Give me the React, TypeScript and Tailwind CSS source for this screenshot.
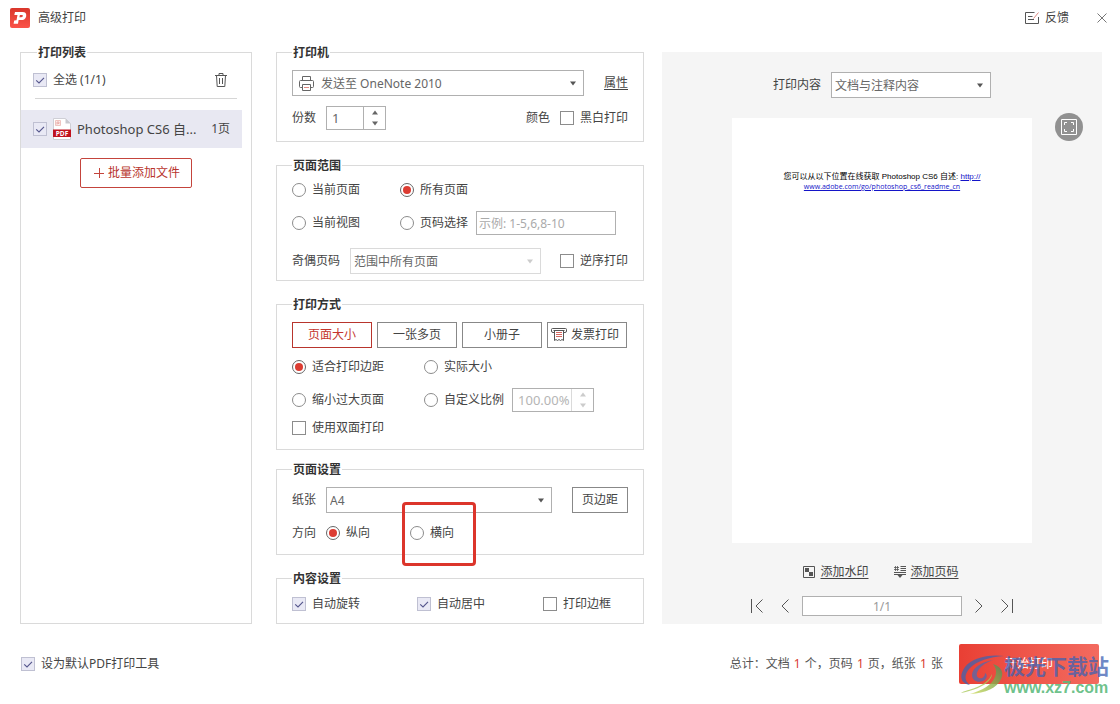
import { useState } from "react"
import type { ReactNode } from "react"

type SectionProps = {
  title: string
  className?: string
  children: ReactNode
}

const Section = ({ title, className = "", children }: SectionProps) => (
  <fieldset className={`min-w-0 border border-[#dadada] px-[15px] ${className}`}>
    <legend className="px-px pt-px font-semibold leading-[15px] text-[#333]">{title}</legend>
    {children}
  </fieldset>
)

type ChoiceProps = {
  label: string
  checked?: boolean
  className?: string
}

const CheckBox = ({ label, checked = false, className = "" }: ChoiceProps) => {
  const [on, setOn] = useState(checked)
  return (
    <label className={`flex items-center gap-1.5 ${className}`}>
      <span className="relative flex">
        <input
          type="checkbox"
          checked={on}
          onChange={() => setOn(!on)}
          className="peer size-3.5 appearance-none border border-[#8c8c8c] bg-white checked:border-[#bfc0d2] checked:bg-[#e9e9f5]"
        />
        <svg
          viewBox="0 0 14 14"
          className="pointer-events-none absolute inset-0 hidden size-3.5 peer-checked:block"
          fill="none"
          stroke="#54558c"
          strokeWidth="1.1"
        >
          <path d="M3.2 7.4 6 10l5-5.2" />
        </svg>
      </span>
      {label}
    </label>
  )
}

type RadioProps = ChoiceProps & { name: string }

const Radio = ({ label, name, checked = false, className = "" }: RadioProps) => (
  <label className={`flex items-center gap-1.5 ${className}`}>
    <input
      type="radio"
      name={name}
      defaultChecked={checked}
      className="grid size-3.5 appearance-none place-content-center rounded-full border border-[#8c8c8c] bg-white checked:border-[#666] checked:before:size-2 checked:before:rounded-full checked:before:bg-[#dc3c32] checked:before:content-['']"
    />
    {label}
  </label>
)

type DropDownProps = {
  id: string
  value: string
  icon?: ReactNode
  disabled?: boolean
  className?: string
}

const DropDown = ({ id, value, icon, disabled = false, className = "" }: DropDownProps) => (
  <div
    className={`relative flex h-[26px] items-center border bg-white ${
      disabled ? "border-[#dadada]" : "border-[#b0b0b0]"
    } ${className}`}
  >
    {icon}
    <select
      id={id}
      disabled={disabled}
      className="h-full w-full appearance-none bg-transparent pl-[3px] pt-px text-[#666] opacity-100"
    >
      <option>{value}</option>
    </select>
    <svg
      viewBox="0 0 8 5"
      className={`pointer-events-none absolute right-1.5 h-[5px] w-2 ${
        disabled ? "text-[#ccc]" : "text-[#555]"
      }`}
    >
      <path d="M1 0.5h6L4 4.5z" fill="currentColor" />
    </svg>
  </div>
)

type SpinnerProps = {
  label: string
  value: string
  disabled?: boolean
  className?: string
}

const Spinner = ({ label, value, disabled = false, className = "" }: SpinnerProps) => (
  <div
    className={`flex h-6 border border-[#b0b0b0] ${
      disabled ? "text-[#b5b5b5]" : "text-[#666]"
    } ${className}`}
  >
    <input
      aria-label={label}
      defaultValue={value}
      disabled={disabled}
      className="w-0 flex-1 bg-white pl-[5px] text-[13px]"
    />
    <div
      className={`flex w-[22px] flex-col border-l ${
        disabled ? "border-[#dadada] text-[#ccc]" : "border-[#b0b0b0] text-[#666]"
      }`}
    >
      <button type="button" aria-label="+" className="flex flex-1 items-center justify-center">
        <svg viewBox="0 0 8 5" className="h-[5px] w-2">
          <path d="M1 4.5h6L4 0.5z" fill="currentColor" />
        </svg>
      </button>
      <button type="button" aria-label="-" className="flex flex-1 items-center justify-center">
        <svg viewBox="0 0 8 5" className="h-[5px] w-2">
          <path d="M1 0.5h6L4 4.5z" fill="currentColor" />
        </svg>
      </button>
    </div>
  </div>
)

const Logo = () => (
  <svg viewBox="0 0 20 20" className="size-5">
    <defs>
      <linearGradient id="logo" x1="0" y1="0" x2="0" y2="1">
        <stop offset="0" stopColor="#d9362b" />
        <stop offset="1" stopColor="#fb5349" />
      </linearGradient>
    </defs>
    <rect width="20" height="20" rx="2" fill="url(#logo)" />
    <path
      d="M5 4h7.500c2.800 0 4.200 1.600 3.700 4.200-.5 2.500-2.400 3.900-5 3.900H8.600L8 15.800H3.600l.6-3.400 2.300-.1L7.500 7H4.300z"
      fill="#fff"
    />
    <path d="M9.900 7h1.900c.8 0 1.100.4 1 1.100-.2.800-.7 1.200-1.500 1.200H9.400z" fill="#e2443a" />
  </svg>
)

const PrinterIcon = () => (
  <svg
    viewBox="0 0 15 15"
    className="ml-1.5 size-[15px] shrink-0"
    fill="none"
    stroke="#666"
  >
    <path d="M3.500 4.500v-4h8v4M3.500 11.500h-2q-1 0-1-1v-5q0-1 1-1h12q1 0 1 1v5q0 1-1 1h-2" />
    <path d="M3.500 8.500h8v6h-8z" />
    <path d="M5 11.500h5" stroke="#e08a84" />
  </svg>
)

const PdfIcon = () => (
  <svg viewBox="0 0 18 22" className="h-[22px] w-[18px] shrink-0">
    <path d="M.5.500h12l5 5v16H.5z" fill="#fff" stroke="#cfcfd6" />
    <path d="M12.500.500v5h5z" fill="#c9c9cf" />
    <path d="M2.500 2.500h5v5h-5z" fill="#fbeceb" stroke="#efc4c0" />
    <path d="M4 6.500v-2.500h2v1.500H4.500" fill="none" stroke="#e59a94" strokeWidth=".7" />
    <path d="M0 11.500h18v7.500H0z" fill="#c0121f" />
    <text
      x="9"
      y="17.700"
      fill="#fff"
      fontSize="6.500"
      fontWeight="700"
      textAnchor="middle"
      fontFamily="Open Sans, sans-serif"
    >
      PDF
    </text>
  </svg>
)

const TrashIcon = () => (
  <svg viewBox="0 0 12 14" className="h-3.5 w-3" fill="none" stroke="#555">
    <path d="M0 2.500h12M4 2.500v-2h4v2M1.500 2.500l.7 11h7.600l.7-11M4.500 5v6M7.500 5v6" />
  </svg>
)

const ReceiptIcon = () => (
  <svg viewBox="0 0 16 14" className="h-3.5 w-4 shrink-0" fill="none" stroke="#555">
    <path d="M3.500 4.500H2Q.5 4.500.5 3V1.500q0-1 1-1h13q1 0 1 1V3q0 1.500-1.500 1.500h-1.500" />
    <path d="M2.500 2.500h11M3.500 2.500V12.500l1.500-1 1.500 1 1.500-1 1.500 1 1.500-1 1.500 1V2.500" />
    <path d="M5 4.500h6M5 6.500h6M5 8.500h6" stroke="#d6675f" />
  </svg>
)

const FeedbackIcon = () => (
  <svg viewBox="0 0 14 12" className="h-3 w-3.5" fill="none" stroke="#555">
    <path d="M9.500.500h-9v11h13V5M3 4.500h4.500M3 7.500h6" />
    <path d="M8.500 6.500 13.500.500" stroke="#e08a84" />
  </svg>
)

const WatermarkIcon = () => (
  <svg viewBox="0 0 12 12" className="size-3">
    <path d="M.5.500h11v11H.5z" fill="none" stroke="#555" />
    <path d="M2 2h4v4H2zM6 6h4v4H6z" fill="#555" />
  </svg>
)

const PageNumberIcon = () => (
  <svg viewBox="0 0 12 12" className="size-3" fill="none" stroke="#555">
    <path
      d="M1.500 0v5M3.500 0v5M0 1.500h5M0 3.500h5"
      strokeWidth=".8"
    />
    <path d="M6.500.500H12M6.500 2.500H12M6.500 4.500H12M0 6.500h12M0 8.500h12" />
    <path d="M3.500 9h5L6 12z" fill="#555" stroke="none" />
  </svg>
)

const ARROWS: Record<string, string> = {
  first: "M.5 0v14M11.500.500 5 7l6.500 6.500",
  prev: "M9.500.500 3 7l6.500 6.500",
  next: "M2.500.500 9 7l-6.500 6.500",
  last: "M11.500 0v14M.5.500 7 7 .5 13.500",
}

const PageArrow = ({ kind, label }: { kind: string; label: string }) => (
  <button type="button" aria-label={label}>
    <svg viewBox="0 0 12 14" className="h-3.5 w-3" fill="none" stroke="#555">
      <path d={ARROWS[kind]} />
    </svg>
  </button>
)

const SiteMark = () => (
  <div className="pointer-events-none absolute -right-2.5 top-2 flex items-start whitespace-nowrap">
    <svg viewBox="0 0 44 40" className="mt-[3px] h-10 w-11 opacity-80">
      <defs>
        <linearGradient id="swirl" x1="0" y1="1" x2="1" y2="0">
          <stop offset="0" stopColor="#d3df62" />
          <stop offset=".5" stopColor="#8db34a" />
          <stop offset="1" stopColor="#4c8c5c" />
        </linearGradient>
      </defs>
      <path
        d="M44 1C28-1 12 3 5 12c-6 8-5 17 5 18-6-4-6-11 0-17C17 6 29 2 44 1z"
        fill="#4a62a8"
      />
      <path
        d="M33 5C21 7 12 13 12 20c0 6 6 8 11 6 4-2 5-6 2-8 0 4-3 6-6 5-3-1-3-5 0-9 3-4 8-7 14-9z"
        fill="#5a68a8"
      />
      <path
        d="M33 9c9 3 11 9 8 15-4 9-15 14-31 15 13-4 22-9 25-17 2-5 1-9-2-13z"
        fill="url(#swirl)"
      />
      <path d="M32 19c0 7-10 15-31 19 6-4 25-5 31-19z" fill="#a9c95a" />
    </svg>
    <div className="flex flex-col">
      <span className="text-[21px] font-bold leading-7 text-[#3f62b4]/75">极光下载站</span>
      <span className="font-['Liberation_Sans',sans-serif] text-base font-bold leading-4 text-[#5cba7c]/90">
        www.xz7.com
      </span>
    </div>
  </div>
)

const MODES = ["一张多页", "小册子"]

const App = () => {
  return (
    <div className="flex min-h-screen flex-col bg-white font-['Noto_Sans','Noto_Sans_CJK_SC',sans-serif] text-xs leading-4 text-[#444]">
      <header className="flex h-11 items-start justify-between pl-2.5 pr-[13px] pt-2">
        <h1 className="flex items-center gap-2">
          <Logo />
          高级打印
        </h1>
        <div className="flex h-5 items-center gap-7">
          <a href="#feedback" className="flex items-center gap-1.5">
            <FeedbackIcon />
            反馈
          </a>
          <button type="button" aria-label="关闭">
            <svg viewBox="0 0 10 10" className="size-2.5" fill="none" stroke="#777">
              <path d="M.5.500l9 9M9.500.500l-9 9" />
            </svg>
          </button>
        </div>
      </header>

      <main className="flex flex-1 pl-5 pr-[18px]">
        <fieldset className="flex w-[232px] flex-col border border-[#dadada]">
          <legend className="ml-4 px-px pt-px font-semibold leading-[15px] text-[#333]">
            打印列表
          </legend>
          <div className="ml-3 mr-6 mt-3 flex items-center justify-between">
            <CheckBox label="全选 (1/1)" checked />
            <button type="button" aria-label="删除">
              <TrashIcon />
            </button>
          </div>
          <hr className="mx-3.5 mt-2.5 border-[#d6d6d6]" />
          <div className="mr-[9px] mt-[11px] flex h-[38px] items-center gap-1.5 bg-[#e8e8f2] px-3">
            <CheckBox label="" checked className="w-3.5" />
            <PdfIcon />
            <span className="flex-1 whitespace-nowrap text-[13px]">Photoshop CS6 自...</span>
            <span>1页</span>
          </div>
          <button
            type="button"
            className="mt-2.5 flex h-[30px] w-28 items-center justify-center gap-1 self-center rounded-xs border border-[#c4443c] pl-0.5 text-[#b8352d]"
          >
            <svg viewBox="0 0 10 10" className="size-2.5" stroke="#c4443c">
              <path d="M0 5.500h10M5.500 0v10" />
            </svg>
            批量添加文件
          </button>
        </fieldset>

        <div className="ml-6 flex w-[368px] flex-col">
          <Section title="打印机" className="pb-[11px]">
            <div className="mt-2.5 flex items-center justify-between">
              <DropDown
                id="printer"
                value="发送至 OneNote 2010"
                icon={<PrinterIcon />}
                className="w-[292px] [&_select]:pl-[7px]"
              />
              <a href="#properties" className="underline underline-offset-2">
                属性
              </a>
            </div>
            <div className="mt-2.5 flex items-center">
              <span>份数</span>
              <Spinner label="份数" value="1" className="ml-2.5 w-[60px]" />
              <span className="ml-auto mr-2.5">颜色</span>
              <CheckBox label="黑白打印" />
            </div>
          </Section>

          <Section title="页面范围" className="mt-[15px] pb-1.5">
            <div className="mt-[9px] flex">
              <Radio name="range" label="当前页面" className="w-[108px]" />
              <Radio name="range" label="所有页面" checked />
            </div>
            <div className="mt-[13px] flex items-center">
              <Radio name="range" label="当前视图" className="w-[108px]" />
              <Radio name="range" label="页码选择" />
              <input
                aria-label="页码选择"
                placeholder="示例: 1-5,6,8-10"
                className="ml-2 h-6 w-[140px] border border-[#b0b0b0] px-0.5 placeholder:text-[#aaa]"
              />
            </div>
            <div className="mt-[13px] flex items-center">
              <label htmlFor="parity">奇偶页码</label>
              <DropDown
                id="parity"
                value="范围中所有页面"
                disabled
                className="ml-2.5 mr-auto w-[191px]"
              />
              <CheckBox label="逆序打印" />
            </div>
          </Section>

          <Section title="打印方式" className="mt-[15px] pb-[13px]">
            <div className="mt-2.5 flex gap-[5px]">
              <button type="button" className="h-[26px] w-20 border border-[#b8352d] text-[#c4352d]">
                页面大小
              </button>
              {MODES.map((mode) => (
                <button key={mode} type="button" className="h-[26px] w-20 border border-[#888]">
                  {mode}
                </button>
              ))}
              <button
                type="button"
                className="flex h-[26px] w-20 items-center gap-1 border border-[#888] pl-[3px]"
              >
                <ReceiptIcon />
                发票打印
              </button>
            </div>
            <div className="mt-[11px] flex">
              <Radio name="scale" label="适合打印边距" checked className="w-[132px]" />
              <Radio name="scale" label="实际大小" />
            </div>
            <div className="mt-[13px] flex items-center">
              <Radio name="scale" label="缩小过大页面" className="w-[132px]" />
              <Radio name="scale" label="自定义比例" />
              <Spinner label="自定义比例" value="100.00%" disabled className="ml-2 w-[82px]" />
            </div>
            <CheckBox label="使用双面打印" className="mt-2" />
          </Section>

          <Section title="页面设置" className="mt-[11px] pb-[13px]">
            <div className="mt-2.5 flex items-center">
              <label htmlFor="paper">纸张</label>
              <DropDown id="paper" value="A4" className="ml-2.5 mr-auto w-[226px]" />
              <button type="button" className="h-[26px] w-14 border border-[#888]">
                页边距
              </button>
            </div>
            <div className="mt-3 flex items-center">
              <span>方向</span>
              <Radio name="direction" label="纵向" checked className="ml-2.5 w-[84px]" />
              <div className="relative">
                <Radio name="direction" label="横向" />
                <div className="pointer-events-none absolute -left-2 -top-[23px] h-16 w-[74px] rounded-sm border-3 border-[#dc352b]" />
              </div>
            </div>
          </Section>

          <Section title="内容设置" className="mt-[15px] pb-[11px]">
            <div className="mt-2.5 flex">
              <CheckBox label="自动旋转" checked className="w-[125px]" />
              <CheckBox label="自动居中" checked className="w-[126px]" />
              <CheckBox label="打印边框" />
            </div>
          </Section>
        </div>

        <section className="relative ml-[18px] mt-2 flex flex-1 flex-col items-center bg-[#f5f5f5] pt-5">
          <div className="flex items-center gap-2.5">
            <label htmlFor="content">打印内容</label>
            <DropDown id="content" value="文档与注释内容" className="w-40" />
          </div>
          <button
            type="button"
            aria-label="全屏"
            className="absolute right-[19px] top-[61px] flex size-7 items-center justify-center rounded-full bg-[#919191]"
          >
            <svg viewBox="0 0 16 16" className="size-4" fill="none" stroke="#fff">
              <path d="M.5.500h15v15H.5z" />
              <path d="M3.500 6V3.500H6M10 3.500h2.500V6M12.500 10v2.500H10M6 12.500H3.500V10" />
            </svg>
          </button>
          <article className="mt-5 aspect-[300/425] w-[300px] bg-white pt-[54px] text-center font-['Liberation_Sans','Noto_Sans_CJK_SC',sans-serif] text-[8px] leading-[10px] text-black">
            您可以从以下位置在线获取 Photoshop CS6 自述:{" "}
            <a href="#readme" className="text-[#1414c8] underline">
              http://
              <br />
              <span className="font-['Open_Sans',sans-serif] text-[7px]">
                www.adobe.com/go/photoshop_cs6_readme_cn
              </span>
            </a>
          </article>
          <div className="mt-[21px] flex gap-[25px] pr-0.5">
            <a href="#watermark" className="flex items-center gap-[5px] underline underline-offset-2">
              <WatermarkIcon />
              添加水印
            </a>
            <a href="#page-number" className="flex items-center gap-[5px] underline underline-offset-2">
              <PageNumberIcon />
              添加页码
            </a>
          </div>
          <nav className="mt-4 flex items-center">
            <PageArrow kind="first" label="第一页" />
            <span className="w-4" />
            <PageArrow kind="prev" label="上一页" />
            <input
              aria-label="页码"
              defaultValue="1/1"
              className="mx-[11px] h-5 w-40 border border-[#b0b0b0] bg-white text-center text-[#999]"
            />
            <PageArrow kind="next" label="下一页" />
            <span className="w-4" />
            <PageArrow kind="last" label="最后一页" />
          </nav>
        </section>
      </main>

      <footer className="flex h-20 items-center px-[21px]">
        <CheckBox label="设为默认PDF打印工具" checked />
        <p className="ml-auto text-[#555]">
          总计：文档 <span className="px-px text-[#d93a30]">1</span> 个，页码{" "}
          <span className="px-px text-[#d93a30]">1</span> 页，纸张{" "}
          <span className="px-px text-[#d93a30]">1</span> 张
        </p>
        <div className="relative ml-4">
          <button
            type="button"
            className="h-10 w-[140px] rounded-xs bg-linear-to-r from-[#e93f34] to-[#f36a5f] text-white"
          >
            开始打印
          </button>
          <SiteMark />
        </div>
      </footer>
    </div>
  )
}

export default App
